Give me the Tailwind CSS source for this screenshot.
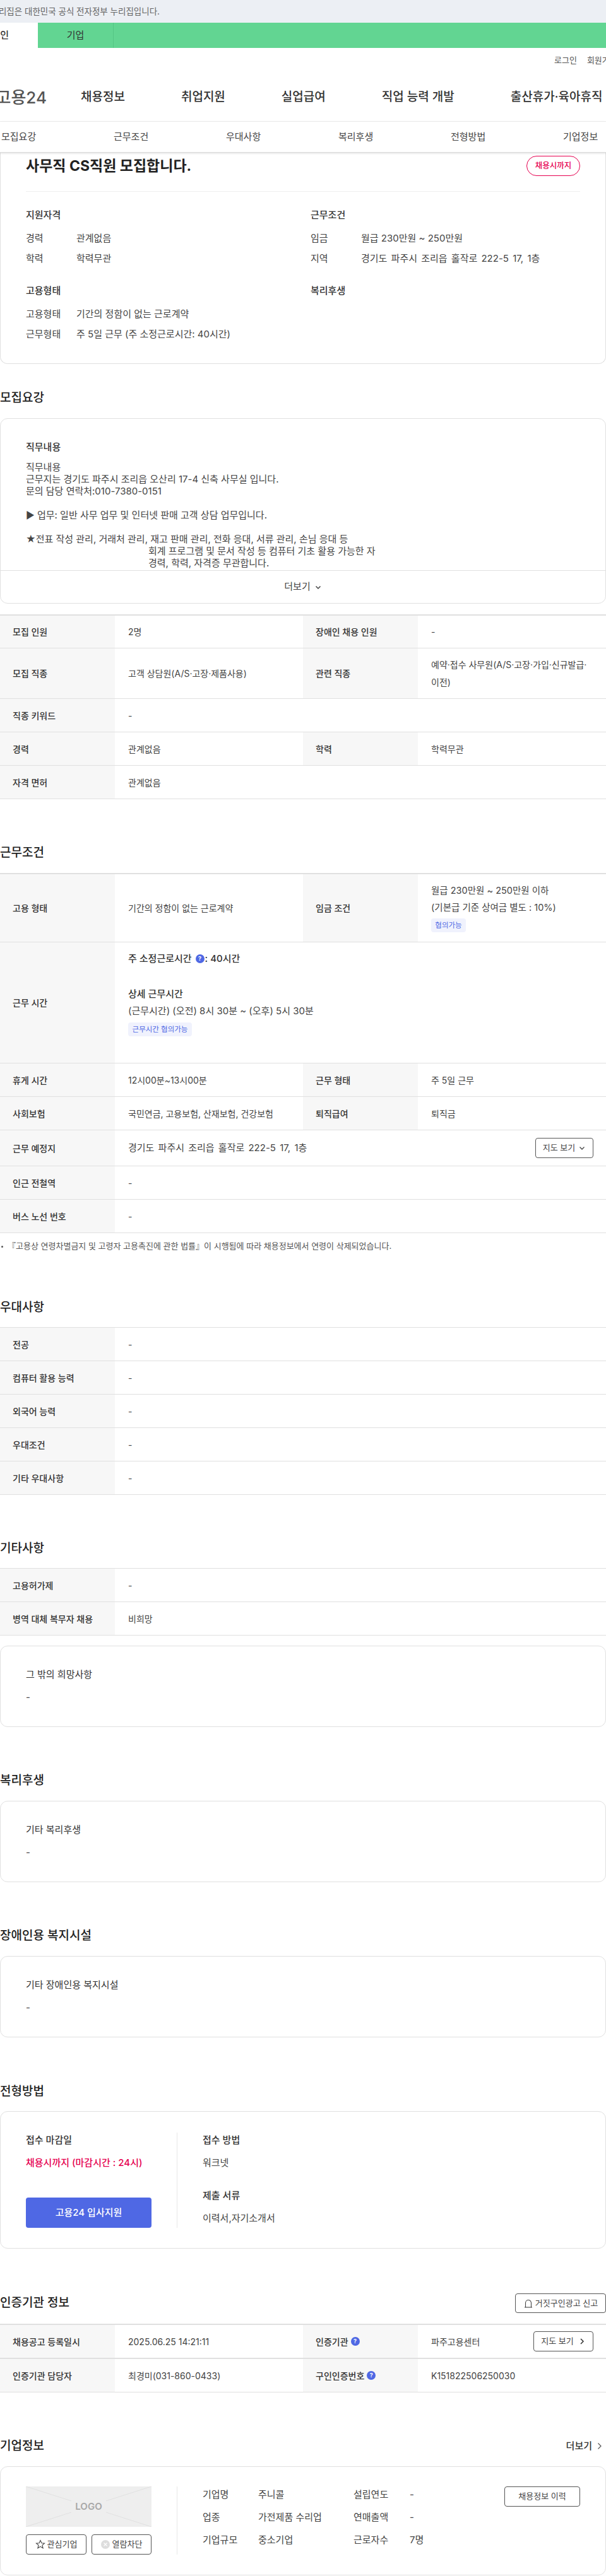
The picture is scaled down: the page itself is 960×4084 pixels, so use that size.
<!DOCTYPE html>
<html lang="ko">

<head>
    <meta charset="UTF-8">
    <meta name="viewport" content="width=device-width, initial-scale=1.0">
    <title>채용정보 상세</title>
    <script src="https://cdn.jsdelivr.net/npm/@tailwindcss/browser@4"></script>
</head>

<body class="bg-white overflow-x-hidden font-['Inter','Noto_Sans_CJK_KR',sans-serif] text-[15px] text-[#444]">

    <!-- top banners -->
    <div class="h-9 bg-[#eceff4] flex items-center">
        <div class="w-[253px] flex justify-end overflow-hidden whitespace-nowrap text-[13.5px] text-[#666]">이 누리집은 대한민국 공식 전자정부 누리집입니다.</div>
    </div>
    <div class="h-10 bg-[#62d592] flex">
        <div class="w-[60px] bg-white flex justify-end items-center overflow-hidden">
            <span class="pr-[46px] text-[15px] text-[#333] whitespace-nowrap font-medium">개인</span>
        </div>
        <div class="w-[120px] border-r border-[#55c685] flex items-center justify-center text-[15px] text-[#333]">기업</div>
    </div>

    <!-- header -->
    <div class="h-10 pl-[878px] flex items-center gap-4 overflow-hidden whitespace-nowrap text-[13px] text-[#555]">
        <span>로그인</span>
        <span>회원가입</span>
    </div>
    <div class="h-[77px] border-b border-[#eeeeee] flex items-center whitespace-nowrap">
        <div class="w-[74px] flex justify-end overflow-hidden text-[26px] font-medium text-[#555]">고용24</div>
        <nav class="ml-[54px] flex gap-[89px] text-[19px] font-medium text-[#333]">
            <span>채용정보</span>
            <span>취업지원</span>
            <span>실업급여</span>
            <span>직업 능력 개발</span>
            <span>출산휴가·육아휴직</span>
        </nav>
    </div>
    <div class="h-[49px] pl-[2px] grid grid-cols-[repeat(5,178px)_1fr] items-center border-b border-[#dddddd] shadow-[0_1px_3px_rgba(0,0,0,0.15)] relative z-10 text-[15px] text-[#444]">
        <span>모집요강</span>
        <span>근무조건</span>
        <span>우대사항</span>
        <span>복리후생</span>
        <span>전형방법</span>
        <span>기업정보</span>
    </div>

    <!-- summary card -->
    <section class="h-[335px] border-x-[1.5px] border-b-[1.5px] border-[#e0e0e0] rounded-b-xl px-[40px] pt-[5px]">
        <div class="h-[57px] pb-[24px] border-b border-[#eeeeee] flex items-center justify-between">
            <h1 class="text-[23px] font-bold text-[#222]">사무직 CS직원 모집합니다.</h1>
            <span class="w-[85px] h-[32px] rounded-full border border-[#e6004f] flex items-center justify-center text-[12.5px] font-medium text-[#e6004f]">채용시까지</span>
        </div>
        <div class="mt-[25px] grid grid-cols-[451px_1fr] gap-y-[23px]">
            <div>
                <h3 class="h-6 mb-[9px] flex items-center font-medium text-[#333]">지원자격</h3>
                <div class="h-8 flex items-center"><span class="w-[80px]">경력</span><span>관계없음</span></div>
                <div class="h-8 flex items-center"><span class="w-[80px]">학력</span><span>학력무관</span></div>
            </div>
            <div>
                <h3 class="h-6 mb-[9px] flex items-center font-medium text-[#333]">근무조건</h3>
                <div class="h-8 flex items-center"><span class="w-[80px]">임금</span><span>월급 230만원 ~ 250만원</span></div>
                <div class="h-8 flex items-center"><span class="w-[80px]">지역</span><span class="[word-spacing:2px]">경기도 파주시 조리읍 홀작로 222-5 17, 1층</span></div>
            </div>
            <div>
                <h3 class="h-6 mb-[9px] flex items-center font-medium text-[#333]">고용형태</h3>
                <div class="h-8 flex items-center"><span class="w-[80px]">고용형태</span><span>기간의 정함이 없는 근로계약</span></div>
                <div class="h-8 flex items-center"><span class="w-[80px]">근무형태</span><span>주 5일 근무 (주 소정근로시간: 40시간)</span></div>
            </div>
            <div>
                <h3 class="h-6 mb-[9px] flex items-center font-medium text-[#333]">복리후생</h3>
            </div>
        </div>
    </section>

    <!-- 모집요강 -->
    <h2 class="mt-10 h-7 flex items-center text-[19px] font-medium text-[#222]">모집요강</h2>
    <section class="mt-[18px] h-[294px] border-[1.5px] border-[#e0e0e0] rounded-xl overflow-hidden">
        <div class="h-[240px] px-[40px] pt-[33px] overflow-hidden">
            <h3 class="h-6 flex items-center font-medium text-[#333]">직무내용</h3>
            <div class="mt-[10px] leading-[19px]">
                <p>직무내용</p>
                <p>근무지는 경기도 파주시 조리읍 오산리 17-4 신축 사무실 입니다.</p>
                <p>문의 담당 연락처:010-7380-0151</p>
                <p class="mt-[19px]">▶ 업무: 일반 사무 업무 및 인터넷 판매 고객 상담 업무입니다.</p>
                <p class="mt-[19px]">★전표 작성 관리, 거래처 관리, 재고 판매 관리, 전화 응대, 서류 관리, 손님 응대 등</p>
                <p class="pl-[194px]">회계 프로그램 및 문서 작성 등 컴퓨터 기초 활용 가능한 자</p>
                <p class="pl-[194px]">경력, 학력, 자격증 무관합니다.</p>
            </div>
        </div>
        <div class="h-[52px] border-t border-[#e0e0e0] flex items-center justify-center gap-[6px]">
            <span>더보기</span>
            <svg class="w-3 h-3" viewBox="0 0 12 12" fill="none" stroke="#444" stroke-width="1.5"><path d="M2.5 4.5 6 8l3.5-3.5" /></svg>
        </div>
    </section>

    <div class="mt-[17px] border-t-2 border-[#e0e0e0] text-[14px]">
        <div class="h-[52px] grid grid-cols-[182px_298px_182px_298px] border-b border-[#e0e0e0]">
            <div class="bg-[#f7f7f7] pl-5 flex items-center font-medium text-[#333]">모집 인원</div>
            <div class="pl-[21px] flex items-center">2명</div>
            <div class="bg-[#f7f7f7] pl-5 flex items-center font-medium text-[#333]">장애인 채용 인원</div>
            <div class="pl-[21px] flex items-center">-</div>
        </div>
        <div class="h-[80px] grid grid-cols-[182px_298px_182px_298px] border-b border-[#e0e0e0]">
            <div class="bg-[#f7f7f7] pl-5 flex items-center font-medium text-[#333]">모집 직종</div>
            <div class="pl-[21px] flex items-center">고객 상담원(A/S·고장·제품사용)</div>
            <div class="bg-[#f7f7f7] pl-5 flex items-center font-medium text-[#333]">관련 직종</div>
            <div class="pl-[21px] flex items-center leading-[28px] whitespace-nowrap"><span>예약·접수 사무원(A/S·고장·가입·신규발급·<br>이전)</span></div>
        </div>
        <div class="h-[53px] grid grid-cols-[182px_1fr] border-b border-[#e0e0e0]">
            <div class="bg-[#f7f7f7] pl-5 flex items-center font-medium text-[#333]">직종 키워드</div>
            <div class="pl-[21px] flex items-center">-</div>
        </div>
        <div class="h-[53px] grid grid-cols-[182px_298px_182px_298px] border-b border-[#e0e0e0]">
            <div class="bg-[#f7f7f7] pl-5 flex items-center font-medium text-[#333]">경력</div>
            <div class="pl-[21px] flex items-center">관계없음</div>
            <div class="bg-[#f7f7f7] pl-5 flex items-center font-medium text-[#333]">학력</div>
            <div class="pl-[21px] flex items-center">학력무관</div>
        </div>
        <div class="h-[53px] grid grid-cols-[182px_1fr] border-b border-[#e0e0e0]">
            <div class="bg-[#f7f7f7] pl-5 flex items-center font-medium text-[#333]">자격 면허</div>
            <div class="pl-[21px] flex items-center">관계없음</div>
        </div>
    </div>

    <!-- 근무조건 -->
    <h2 class="mt-[71px] h-7 flex items-center text-[19px] font-medium text-[#222]">근무조건</h2>
    <div class="mt-[18px] border-t-2 border-[#e0e0e0] text-[14px]">
        <div class="h-[108px] grid grid-cols-[182px_298px_182px_298px] border-b border-[#e0e0e0]">
            <div class="bg-[#f7f7f7] pl-5 flex items-center font-medium text-[#333]">고용 형태</div>
            <div class="pl-[21px] flex items-center">기간의 정함이 없는 근로계약</div>
            <div class="bg-[#f7f7f7] pl-5 flex items-center font-medium text-[#333]">임금 조건</div>
            <div class="pl-[21px] pt-[12px] leading-[27px] text-[14.5px]">
                <p>월급 230만원 ~ 250만원 이하</p>
                <p>(기본급 기준 상여금 별도 : 10%)</p>
                <span class="mt-[4px] h-[22px] w-[55px] rounded bg-[#f0f2fd] text-[#4f68e4] text-[11.5px] flex items-center justify-center">협의가능</span>
            </div>
        </div>
        <div class="h-[192px] grid grid-cols-[182px_1fr] border-b border-[#e0e0e0]">
            <div class="bg-[#f7f7f7] pl-5 flex items-center font-medium text-[#333]">근무 시간</div>
            <div class="pl-[21px] pt-[12px] leading-[27px] text-[15px]">
                <p class="flex items-center font-medium text-[#333]">주 소정근로시간
                    <span class="ml-[6px] mr-[1px] w-[14px] h-[14px] rounded-full bg-[#4f68e4] text-white text-[9px] font-bold flex items-center justify-center">?</span>: 40시간
                </p>
                <p class="mt-[29px] font-medium text-[#333]">상세 근무시간</p>
                <p>(근무시간) (오전) 8시 30분 ~ (오후) 5시 30분</p>
                <span class="mt-[5px] h-[22px] w-[101px] rounded bg-[#f0f2fd] text-[#4f68e4] text-[11.5px] flex items-center justify-center">근무시간 협의가능</span>
            </div>
        </div>
        <div class="h-[53px] grid grid-cols-[182px_298px_182px_298px] border-b border-[#e0e0e0]">
            <div class="bg-[#f7f7f7] pl-5 flex items-center font-medium text-[#333]">휴게 시간</div>
            <div class="pl-[21px] flex items-center">12시00분~13시00분</div>
            <div class="bg-[#f7f7f7] pl-5 flex items-center font-medium text-[#333]">근무 형태</div>
            <div class="pl-[21px] flex items-center">주 5일 근무</div>
        </div>
        <div class="h-[53px] grid grid-cols-[182px_298px_182px_298px] border-b border-[#e0e0e0]">
            <div class="bg-[#f7f7f7] pl-5 flex items-center font-medium text-[#333]">사회보험</div>
            <div class="pl-[21px] flex items-center">국민연금, 고용보험, 산재보험, 건강보험</div>
            <div class="bg-[#f7f7f7] pl-5 flex items-center font-medium text-[#333]">퇴직급여</div>
            <div class="pl-[21px] flex items-center">퇴직금</div>
        </div>
        <div class="h-[57px] grid grid-cols-[182px_1fr] border-b border-[#e0e0e0]">
            <div class="bg-[#f7f7f7] pl-5 flex items-center font-medium text-[#333]">근무 예정지</div>
            <div class="pl-[21px] pr-5 flex items-center justify-between">
                <span class="text-[15px] [word-spacing:2px]">경기도 파주시 조리읍 홀작로 222-5 17, 1층</span>
                <button class="w-[92px] h-[32px] border border-[#555] rounded flex items-center justify-center gap-[5px] text-[13px]">
                    지도 보기
                    <svg class="w-3 h-3" viewBox="0 0 12 12" fill="none" stroke="#444" stroke-width="1.3"><path d="M2.5 4.5 6 8l3.5-3.5" /></svg>
                </button>
            </div>
        </div>
        <div class="h-[53px] grid grid-cols-[182px_1fr] border-b border-[#e0e0e0]">
            <div class="bg-[#f7f7f7] pl-5 flex items-center font-medium text-[#333]">인근 전철역</div>
            <div class="pl-[21px] flex items-center">-</div>
        </div>
        <div class="h-[53px] grid grid-cols-[182px_1fr] border-b border-[#e0e0e0]">
            <div class="bg-[#f7f7f7] pl-5 flex items-center font-medium text-[#333]">버스 노선 번호</div>
            <div class="pl-[21px] flex items-center">-</div>
        </div>
    </div>
    <p class="mt-[11px] h-5 flex items-center text-[13px] text-[#555] whitespace-nowrap"><span class="w-[3px] h-[3px] ml-[2px] mr-[7px] rounded-full bg-[#555]"></span>『고용상 연령차별금지 및 고령자 고용촉진에 관한 법률』이 시행됨에 따라 채용정보에서 연령이 삭제되었습니다.</p>

    <!-- 우대사항 -->
    <h2 class="mt-[73px] h-7 flex items-center text-[19px] font-medium text-[#222]">우대사항</h2>
    <div class="mt-[17px] border-t border-[#e0e0e0] text-[14px]">
        <div class="h-[53px] grid grid-cols-[182px_1fr] border-b border-[#e0e0e0]">
            <div class="bg-[#f7f7f7] pl-5 flex items-center font-medium text-[#333]">전공</div>
            <div class="pl-[21px] flex items-center">-</div>
        </div>
        <div class="h-[53px] grid grid-cols-[182px_1fr] border-b border-[#e0e0e0]">
            <div class="bg-[#f7f7f7] pl-5 flex items-center font-medium text-[#333]">컴퓨터 활용 능력</div>
            <div class="pl-[21px] flex items-center">-</div>
        </div>
        <div class="h-[53px] grid grid-cols-[182px_1fr] border-b border-[#e0e0e0]">
            <div class="bg-[#f7f7f7] pl-5 flex items-center font-medium text-[#333]">외국어 능력</div>
            <div class="pl-[21px] flex items-center">-</div>
        </div>
        <div class="h-[53px] grid grid-cols-[182px_1fr] border-b border-[#e0e0e0]">
            <div class="bg-[#f7f7f7] pl-5 flex items-center font-medium text-[#333]">우대조건</div>
            <div class="pl-[21px] flex items-center">-</div>
        </div>
        <div class="h-[53px] grid grid-cols-[182px_1fr] border-b border-[#e0e0e0]">
            <div class="bg-[#f7f7f7] pl-5 flex items-center font-medium text-[#333]">기타 우대사항</div>
            <div class="pl-[21px] flex items-center">-</div>
        </div>
    </div>

    <!-- 기타사항 -->
    <h2 class="mt-[71px] h-7 flex items-center text-[19px] font-medium text-[#222]">기타사항</h2>
    <div class="mt-[17px] border-t border-[#e0e0e0] text-[14px]">
        <div class="h-[53px] grid grid-cols-[182px_1fr] border-b border-[#e0e0e0]">
            <div class="bg-[#f7f7f7] pl-5 flex items-center font-medium text-[#333]">고용허가제</div>
            <div class="pl-[21px] flex items-center">-</div>
        </div>
        <div class="h-[53px] grid grid-cols-[182px_1fr] border-b border-[#e0e0e0]">
            <div class="bg-[#f7f7f7] pl-5 flex items-center font-medium text-[#333]">병역 대체 복무자 채용</div>
            <div class="pl-[21px] flex items-center">비희망</div>
        </div>
    </div>
    <section class="mt-4 h-[129px] border-[1.5px] border-[#e0e0e0] rounded-xl px-[40px] pt-[33px]">
        <h3 class="h-6 flex items-center text-[#333]">그 밖의 희망사항</h3>
        <p class="mt-3 h-6 flex items-center">-</p>
    </section>

    <!-- 복리후생 -->
    <h2 class="mt-[71px] h-7 flex items-center text-[19px] font-medium text-[#222]">복리후생</h2>
    <section class="mt-[18px] h-[129px] border-[1.5px] border-[#e0e0e0] rounded-xl px-[40px] pt-[33px]">
        <h3 class="h-6 flex items-center text-[#333]">기타 복리후생</h3>
        <p class="mt-3 h-6 flex items-center">-</p>
    </section>

    <!-- 장애인용 복지시설 -->
    <h2 class="mt-[71px] h-7 flex items-center text-[19px] font-medium text-[#222]">장애인용 복지시설</h2>
    <section class="mt-[18px] h-[129px] border-[1.5px] border-[#e0e0e0] rounded-xl px-[40px] pt-[33px]">
        <h3 class="h-6 flex items-center text-[#333]">기타 장애인용 복지시설</h3>
        <p class="mt-3 h-6 flex items-center">-</p>
    </section>

    <!-- 전형방법 -->
    <h2 class="mt-[72px] h-7 flex items-center text-[19px] font-medium text-[#222]">전형방법</h2>
    <section class="mt-[17px] h-[218px] border-[1.5px] border-[#e0e0e0] rounded-xl px-[40px] pt-[33px] flex">
        <div class="w-[199px] h-[151px] pr-[40px] border-r border-[#e8e8e8] box-content">
            <h3 class="h-6 flex items-center font-medium text-[#333]">접수 마감일</h3>
            <p class="mt-3 h-6 flex items-center font-medium text-[#e6004f] whitespace-nowrap">채용시까지 (마감시간 : 24시)</p>
            <button class="mt-[43px] w-[199px] h-12 rounded bg-[#4f68e4] text-white font-medium">고용24 입사지원</button>
        </div>
        <div class="pl-[40px]">
            <h3 class="h-6 flex items-center font-medium text-[#333]">접수 방법</h3>
            <p class="mt-3 h-6 flex items-center">워크넷</p>
            <h3 class="mt-7 h-6 flex items-center font-medium text-[#333]">제출 서류</h3>
            <p class="mt-3 h-6 flex items-center">이력서,자기소개서</p>
        </div>
    </section>

    <!-- 인증기관 정보 -->
    <div class="mt-[71px] flex items-center justify-between">
        <h2 class="h-7 flex items-center text-[19px] font-medium text-[#222]">인증기관 정보</h2>
        <button class="w-[144px] h-[31px] border border-[#555] rounded flex items-center justify-center gap-[3px] text-[13px]">
            <svg class="w-4 h-4" viewBox="0 0 16 16" fill="none" stroke="#444" stroke-width="1.1"><path d="M3.5 14V7a4.5 4.5 0 0 1 9 0v7" /><path d="M2 14h12" /></svg>
            거짓구인광고 신고
        </button>
    </div>
    <div class="mt-[17px] border-t-2 border-[#e0e0e0] text-[14px]">
        <div class="h-[54px] grid grid-cols-[182px_298px_182px_298px] border-b-2 border-[#e0e0e0]">
            <div class="bg-[#f7f7f7] pl-5 flex items-center font-medium text-[#333]">채용공고 등록일시</div>
            <div class="pl-[21px] flex items-center">2025.06.25 14:21:11</div>
            <div class="bg-[#f7f7f7] pl-5 flex items-center gap-[4px] font-medium text-[#333]">인증기관
                <span class="w-[14px] h-[14px] rounded-full bg-[#4f68e4] text-white text-[9px] font-bold flex items-center justify-center">?</span>
            </div>
            <div class="pl-[21px] pr-5 flex items-center justify-between">
                <span>파주고용센터</span>
                <button class="w-[95px] h-[32px] border border-[#555] rounded flex items-center justify-center gap-[7px] text-[13px]">
                    지도 보기
                    <svg class="w-3 h-3" viewBox="0 0 12 12" fill="none" stroke="#333" stroke-width="1.5"><path d="M4 2l4 4-4 4" /></svg>
                </button>
            </div>
        </div>
        <div class="h-[53px] grid grid-cols-[182px_298px_182px_298px] border-b border-[#e0e0e0]">
            <div class="bg-[#f7f7f7] pl-5 flex items-center font-medium text-[#333]">인증기관 담당자</div>
            <div class="pl-[21px] flex items-center">최경미(031-860-0433)</div>
            <div class="bg-[#f7f7f7] pl-5 flex items-center gap-[4px] font-medium text-[#333]">구인인증번호
                <span class="w-[14px] h-[14px] rounded-full bg-[#4f68e4] text-white text-[9px] font-bold flex items-center justify-center">?</span>
            </div>
            <div class="pl-[21px] flex items-center">K151822506250030</div>
        </div>
    </div>

    <!-- 기업정보 -->
    <div class="mt-[71px] h-7 flex items-center justify-between">
        <h2 class="text-[19px] font-medium text-[#222]">기업정보</h2>
        <span class="flex items-center gap-[6px] pr-[4px] font-medium text-[#333]">더보기
            <svg class="w-3 h-3" viewBox="0 0 12 12" fill="none" stroke="#555" stroke-width="1.2"><path d="M3.5 1.5 8 6l-4.5 4.5" /></svg>
        </span>
    </div>
    <section class="mt-[18px] h-[173px] border-[1.5px] border-[#e0e0e0] rounded-xl px-[40px] pt-[31px] flex">
        <div class="w-[199px] shrink-0">
            <div class="relative h-16 bg-[#eeeeee] flex items-center justify-center">
                <svg class="absolute inset-0 w-full h-full" viewBox="0 0 199 64" fill="none" stroke="#e0e0e0">
                    <path d="M0 0 72 23M199 0 127 23M0 64 72 41M199 64 127 41" />
                </svg>
                <span class="relative text-[15px] font-semibold text-[#a8a8a8]">LOGO</span>
            </div>
            <div class="mt-3 flex justify-between">
                <button class="w-[96px] h-8 border border-[#555] rounded flex items-center justify-center gap-[3px] text-[13px]">
                    <svg class="w-4 h-4" viewBox="0 0 16 16" fill="none" stroke="#444" stroke-width="1.1"><path d="M8 1.5l1.9 4.3 4.6.4-3.5 3 1.1 4.6L8 11.4l-4.1 2.4L5 9.2l-3.5-3 4.6-.4z" /></svg>
                    관심기업
                </button>
                <button class="w-[95px] h-8 border border-[#555] rounded flex items-center justify-center gap-[4px] text-[13px]">
                    <svg class="w-[14px] h-[14px]" viewBox="0 0 14 14"><circle cx="7" cy="7" r="7" fill="#dddddd" /><path d="M4.5 4.5l5 5M9.5 4.5l-5 5" stroke="#fff" stroke-width="1.2" /></svg>
                    열람차단
                </button>
            </div>
        </div>
        <div class="ml-[40px] h-[108px] w-px bg-[#e8e8e8]"></div>
        <div class="ml-[40px] grid grid-cols-[88px_151px_89px_70px] auto-rows-[26px] gap-y-[10px] items-center">
            <span>기업명</span><span>주니콜</span><span>설립연도</span><span>-</span>
            <span>업종</span><span>가전제품 수리업</span><span>연매출액</span><span>-</span>
            <span>기업규모</span><span>중소기업</span><span>근로자수</span><span>7명</span>
        </div>
        <button class="ml-auto w-[120px] h-8 border border-[#555] rounded text-[13px]">채용정보 이력</button>
    </section>

</body>

</html>
